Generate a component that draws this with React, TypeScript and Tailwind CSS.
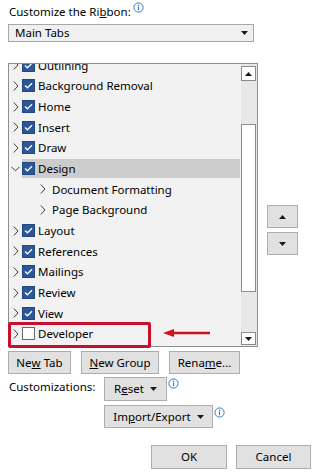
import React from "react";

type Item = { label: React.ReactNode; checked?: boolean; open?: boolean; sub?: boolean; selected?: boolean };

const items: Item[] = [
    { label: "Outlining", checked: true },
    { label: "Background Removal", checked: true },
    { label: "Home", checked: true },
    { label: "Insert", checked: true },
    { label: "Draw", checked: true },
    { label: "Design", checked: true, open: true, selected: true },
    { label: "Document Formatting", sub: true },
    { label: "Page Background", sub: true },
    { label: "Layout", checked: true },
    { label: "References", checked: true },
    { label: "Mailings", checked: true },
    { label: "Review", checked: true },
    { label: "View", checked: true },
    { label: "Developer", checked: false },
];

const Chevron = ({ open }: { open?: boolean }) =>
    open ? (
        <svg width="9" height="6" viewBox="0 0 9 6" className="block">
            <polyline points="0.5,0.8 4.5,4.8 8.5,0.8" fill="none" stroke="#3c3c3c" strokeWidth="1" />
        </svg>
    ) : (
        <svg width="6" height="10" viewBox="0 0 6 10" className="block">
            <polyline points="0.8,0.5 5,5 0.8,9.5" fill="none" stroke="#3c3c3c" strokeWidth="1" />
        </svg>
    );

const Check = ({ checked }: { checked?: boolean }) =>
    checked ? (
        <span className="flex h-[13px] w-[13px] shrink-0 items-center justify-center bg-[#2b579a] border border-[#24487f]">
            <svg width="9" height="7" viewBox="0 0 9 7">
                <polyline points="1,3.6 3.4,5.8 8,1.2" fill="none" stroke="#ffffff" strokeWidth="1.3" />
            </svg>
        </span>
    ) : (
        <span className="block h-[13px] w-[13px] shrink-0 bg-white border border-[#6b6b6b]" />
    );

const Info = () => (
    <svg width="11" height="11" viewBox="0 0 11 11" className="block">
        <circle cx="5.5" cy="5.5" r="4.6" fill="#ffffff" stroke="#2f7bc4" strokeWidth="1" />
        <circle cx="5.5" cy="3.3" r="0.8" fill="#2f7bc4" />
        <rect x="4.9" y="4.6" width="1.2" height="3.6" fill="#2f7bc4" />
    </svg>
);

const Tri = ({ up }: { up?: boolean }) => (
    <svg width="7" height="4" viewBox="0 0 7 4" className="block">
        <polygon points={up ? "0,4 7,4 3.5,0" : "0,0 7,0 3.5,4"} fill="#1a1a1a" />
    </svg>
);

const Btn = ({ children, className }: { children: React.ReactNode; className?: string }) => (
    <div className={"flex items-center justify-center bg-[#e1e1e1] border border-[#adadad] text-[11.5px] text-black " + (className ?? "")}>
        {children}
    </div>
);

export default function App() {
    return (
        <div className="w-[317px] h-[473px] bg-white overflow-hidden px-[8px] pt-[3px] text-black" style={{ fontFamily: '"Noto Sans", "Open Sans", sans-serif' }}>
            {/* header */}
            <div className="flex items-start gap-[2px] pl-[1px] h-[21px]">
                <span className="text-[11.5px] leading-[18px]">
                    Customize the Ri<u>b</u>bon:
                </span>
                <span className="mt-[-1px]">
                    <Info />
                </span>
            </div>
            <div className="flex items-center justify-between w-[246px] h-[18px] bg-[#f0f0f0] border border-[#a8a8a8] pl-[6px] pr-[5px] text-[11.5px]">
                <span>Main Tabs</span>
                <Tri />
            </div>

            {/* tree + move buttons */}
            <div className="flex mt-[21px]">
                <div className="relative flex w-[250px] h-[284px] border border-[#8f8f8f] bg-[#f2f2f2]">
                    <div className="flex-1 overflow-hidden pr-[1px]">
                        <div className="mt-[-9px]">
                            {items.map((it, i) => (
                                <div key={i} className="flex items-center h-[20.67px] text-[11.5px]">
                                    {it.sub ? (
                                        <>
                                            <span className="w-[31px] shrink-0" />
                                            <span className="flex w-[12px] shrink-0 items-center">
                                                <Chevron />
                                            </span>
                                            <span>{it.label}</span>
                                        </>
                                    ) : (
                                        <>
                                            <span className="flex w-[13px] shrink-0 items-center justify-center">
                                                <Chevron open={it.open} />
                                            </span>
                                            <div className={"flex flex-1 items-center h-[19px] " + (it.selected ? "bg-[#cccccc]" : "")}>
                                                <Check checked={it.checked} />
                                                <span className="ml-[3px]">{it.label}</span>
                                            </div>
                                        </>
                                    )}
                                </div>
                            ))}
                        </div>
                    </div>
                    {/* scrollbar */}
                    <div className="flex w-[16px] shrink-0 flex-col bg-[#e8e8e8] pt-[2px] pb-[1px] pr-[1px]">
                        <div className="flex h-[15px] items-center justify-center bg-white border border-[#8a8a8a]">
                            <Tri up />
                        </div>
                        <div className="h-[43px]" />
                        <div className="h-[168px] bg-white border border-[#8a8a8a]" />
                        <div className="flex-1" />
                        <div className="flex h-[13px] items-center justify-center bg-white border border-[#8a8a8a]">
                            <Tri />
                        </div>
                    </div>

                    {/* annotation */}
                    <div className="absolute left-[-1px] top-[258px] w-[143px] h-[26px] border-[3px] border-[#c8102e] rounded-[2px]" />
                    <svg className="absolute left-[154px] top-[264px]" width="48" height="10" viewBox="0 0 48 10">
                        <line x1="8" y1="5" x2="47" y2="5" stroke="#d0101e" strokeWidth="2.6" />
                        <polygon points="0,5 11,1 11,9" fill="#d0101e" />
                    </svg>
                </div>

                <div className="ml-[9px] flex flex-col gap-[4px] pt-[142px]">
                    <Btn className="w-[31px] h-[23px]">
                        <Tri up />
                    </Btn>
                    <Btn className="w-[31px] h-[23px]">
                        <Tri />
                    </Btn>
                </div>
            </div>

            {/* tab buttons */}
            <div className="flex gap-[10px] mt-[4px]">
                <Btn className="w-[63px] h-[23px]">
                    Ne<u>w</u>&nbsp;Tab
                </Btn>
                <Btn className="w-[78px] h-[23px]">
                    <u>N</u>ew Group
                </Btn>
                <Btn className="w-[71px] h-[23px]">
                    Rena<u>m</u>e...
                </Btn>
            </div>

            {/* customizations */}
            <div className="flex mt-[3px]">
                <span className="w-[96px] pl-[1px] pt-[1px] text-[11.5px] leading-[18px]">Customizations:</span>
                <div className="flex flex-col gap-[4px]">
                    <div className="flex items-start">
                        <Btn className="w-[63px] h-[24px] gap-[6px]">
                            <span>
                                R<u>e</u>set
                            </span>
                            <Tri />
                        </Btn>
                        <span className="ml-[1px] mt-[1px]">
                            <Info />
                        </span>
                    </div>
                    <div className="flex items-start">
                        <Btn className="w-[109px] h-[23px] gap-[6px]">
                            <span>
                                Im<u>p</u>ort/Export
                            </span>
                            <Tri />
                        </Btn>
                        <span className="ml-[1px] mt-[2px]">
                            <Info />
                        </span>
                    </div>
                </div>
            </div>

            {/* dialog buttons */}
            <div className="flex justify-end gap-[9px] mt-[17px]">
                <Btn className="w-[76px] h-[24px]">OK</Btn>
                <Btn className="w-[75px] h-[24px] mr-[-2px]">Cancel</Btn>
            </div>
        </div>
    );
}
